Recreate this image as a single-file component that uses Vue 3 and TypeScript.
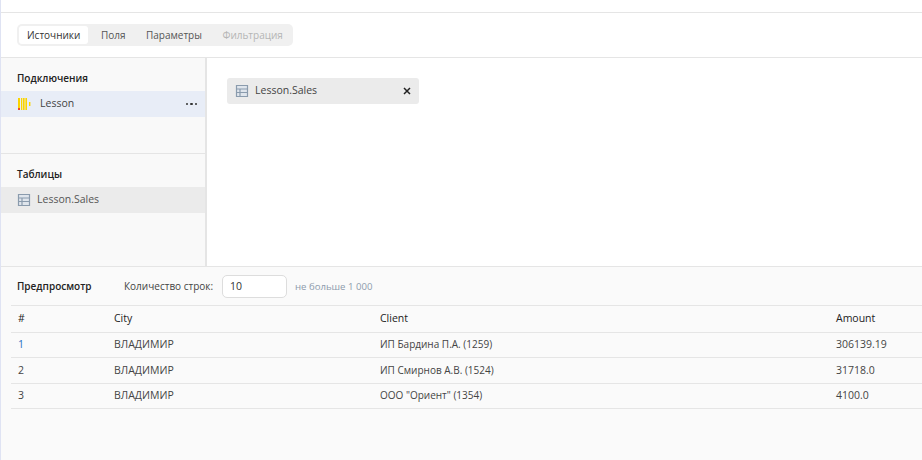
<script setup lang="ts">
interface Row { id: number; city: string; client: string; amount: string }
const tabs = [
  { label: 'Источники', state: 'active' },
  { label: 'Поля', state: '' },
  { label: 'Параметры', state: '' },
  { label: 'Фильтрация', state: 'disabled' },
]
const rows: Row[] = [
  { id: 1, city: 'ВЛАДИМИР', client: 'ИП Бардина П.А. (1259)', amount: '306139.19' },
  { id: 2, city: 'ВЛАДИМИР', client: 'ИП Смирнов А.В. (1524)', amount: '31718.0' },
  { id: 3, city: 'ВЛАДИМИР', client: 'ООО "Ориент" (1354)', amount: '4100.0' },
]
</script>

<template>
  <div class="page">
    <div class="top"></div>
    <div class="tabbar">
      <div class="tabs">
        <span v-for="t in tabs" :key="t.label" class="tab" :class="t.state">{{ t.label }}</span>
      </div>
    </div>
    <div class="main">
      <aside class="side">
        <section class="sec sec-conn">
          <h3>Подключения</h3>
          <div class="item conn">
            <svg class="logo" width="16" height="14" viewBox="0 0 16 14">
              <g fill="#fbd400">
                <rect x="1" y="1" width="2" height="12" />
                <rect x="4" y="1" width="1.3" height="12" />
                <rect x="6" y="1" width="1.6" height="12" />
                <rect x="8.4" y="1" width="1.6" height="12" />
                <rect x="12" y="5" width="1.4" height="4" />
              </g>
              <rect x="1" y="11" width="2" height="2" fill="#f04a2a" />
            </svg>
            <span class="name">Lesson</span>
            <span class="more"><i></i><i></i><i></i></span>
          </div>
        </section>
        <section class="sec">
          <h3>Таблицы</h3>
          <div class="item tbl">
            <svg class="ticon" width="14" height="14" viewBox="0 0 14 14">
              <path d="M1.5 1.5h11v11h-11zM1.5 5h11M1.5 8.5h11M5 5v7.5" fill="#dfe5ec" stroke="#8a9bad" stroke-width="1.2" />
            </svg>
            <span class="name">Lesson.Sales</span>
          </div>
        </section>
      </aside>
      <div class="canvas">
        <div class="chip">
          <svg class="ticon" width="14" height="14" viewBox="0 0 14 14">
            <path d="M1.5 1.5h11v11h-11zM1.5 5h11M1.5 8.5h11M5 5v7.5" fill="#dfe5ec" stroke="#8a9bad" stroke-width="1.2" />
          </svg>
          <span class="name">Lesson.Sales</span>
          <svg class="close" width="8" height="8" viewBox="0 0 8 8">
            <path d="M1 1l6 6M7 1l-6 6" stroke="#222" stroke-width="1.5" fill="none" />
          </svg>
        </div>
      </div>
    </div>
    <div class="preview">
      <div class="pbar">
        <strong>Предпросмотр</strong>
        <label>Количество строк:</label>
        <div class="input">10</div>
        <span class="hint">не больше 1 000</span>
      </div>
      <table>
        <thead>
          <tr><th class="c1">#</th><th class="c2">City</th><th class="c3">Client</th><th>Amount</th></tr>
        </thead>
        <tbody>
          <tr v-for="r in rows" :key="r.id">
            <td class="num" :class="{ link: r.id === 1 }">{{ r.id }}</td>
            <td class="city">{{ r.city }}</td>
            <td>{{ r.client }}</td>
            <td class="amount">{{ r.amount }}</td>
          </tr>
        </tbody>
      </table>
    </div>
  </div>
</template>

<style>
html, body { margin: 0; background: #fff; }
</style>

<style scoped>
.page {
  width: 922px; height: 460px; overflow: hidden; box-sizing: border-box;
  border-left: 1px solid #dfe3f3; display: flex; flex-direction: column;
  font-family: "Open Sans", sans-serif; font-size: 10px; color: #333;
}
.top { height: 12px; flex: none; border-bottom: 1px solid #e5e5e5; }
.tabbar { height: 44px; flex: none; border-bottom: 1px solid #e5e5e5; display: flex; align-items: center; padding-left: 16px; }
.tabs { display: flex; gap: 4.5px; width: 272px; padding: 2px; height: 18px; background: #f0f0f0; border-radius: 5px; }
.tab { padding: 0 8px; line-height: 18px; color: #555; white-space: nowrap; }
.tab.active { background: #fff; border-radius: 3px; color: #333; }
.tab.disabled { color: #b5b5b5; }
.main { height: 208px; flex: none; display: flex; border-bottom: 1px solid #e5e5e5; }
.side { width: 204px; flex: none; background: #f9f9f9; border-right: 2px solid #e5e5e5; }
.sec-conn { height: 95px; border-bottom: 1px solid #e5e5e5; }
.sec h3 { margin: 0; padding: 14px 16px 0; height: 19px; font-size: 10px; line-height: 13px; font-weight: 600; color: #222; }
.item { height: 26px; display: flex; align-items: center; padding-left: 16px; }
.conn { background: #e8edf7; }
.tbl { background: #ebebeb; }
.name { font-size: 10.5px; padding-bottom: 2px; }
.conn .name { margin-left: 7px; flex: 1; color: #444; }
.tbl .name { margin-left: 6px; color: #555; }
.more { display: flex; gap: 2px; margin-right: 8px; }
.more i { width: 2.5px; height: 2.5px; border-radius: 50%; background: #333; }
.canvas { flex: 1; background: #fff; padding: 20px; }
.chip { width: 192px; height: 26px; box-sizing: border-box; background: #ebebeb; border-radius: 3px; display: flex; align-items: center; padding: 0 8px; }
.chip .name { margin-left: 6px; flex: 1; color: #444; }
.preview { flex: 1; background: #fafafa; padding-left: 10px; }
.pbar { height: 38px; display: flex; align-items: center; padding-left: 6px; border-bottom: 1px solid #e5e5e5; }
.pbar strong { font-weight: 600; color: #222; width: 107px; flex: none; }
.pbar label { color: #444; width: 98px; flex: none; white-space: nowrap; }
.input { width: 65px; height: 23px; box-sizing: border-box; background: #fff; border: 1px solid #ddd; border-radius: 5px; line-height: 21px; padding-left: 7px; color: #333; font-size: 10.5px; }
.hint { margin-left: 8px; color: #8d9aac; font-size: 9.6px; }
table { width: 912px; border-collapse: collapse; table-layout: fixed; }
th, td { text-align: left; padding: 0 0 2px 7px; border-bottom: 1px solid #e5e5e5; font-weight: 400; white-space: nowrap; height: 22px; color: #444; }
tbody tr:nth-child(2) td { height: 23px; }
th { height: 24px; color: #222; font-size: 10.5px; }
.city, .amount, .num { font-size: 10.5px; }
.c1 { width: 89px; }
.c2 { width: 259px; }
.c3 { width: 449px; }
td.link { color: #1f6fc0; }
</style>
